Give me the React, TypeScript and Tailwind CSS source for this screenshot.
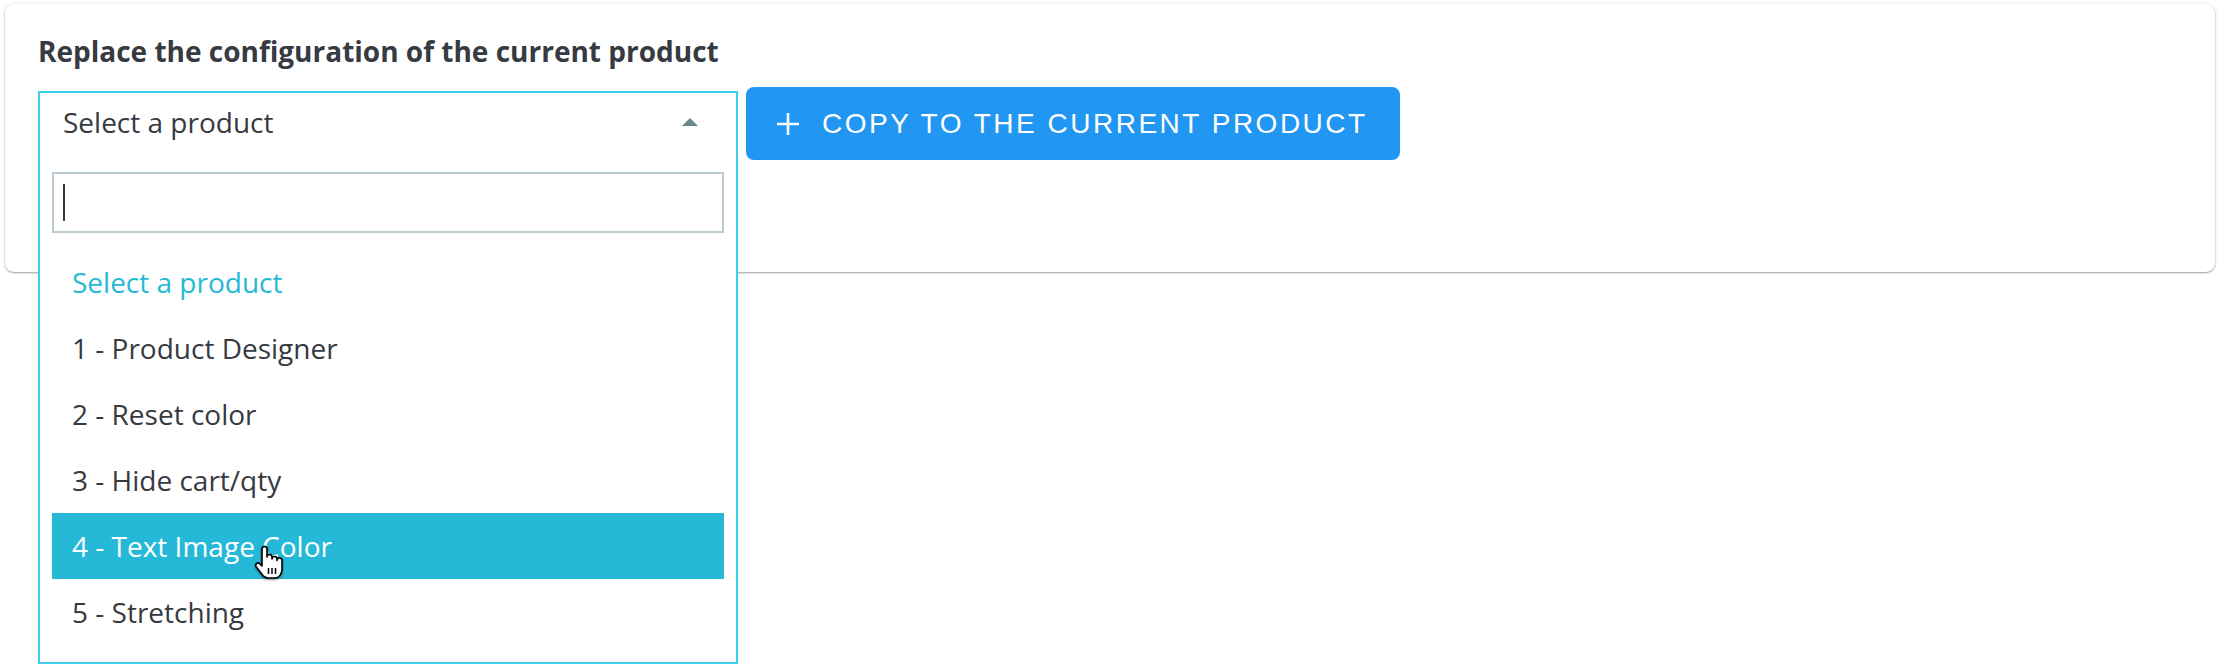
const options = [
  "1 - Product Designer",
  "2 - Reset color",
  "3 - Hide cart/qty",
  "4 - Text Image Color",
  "5 - Stretching",
];

const HandCursor = () => (
  <svg
    className="absolute left-[201px] top-[32px] drop-shadow-[0_1px_1px_rgba(0,0,0,0.5)]"
    width="32"
    height="36"
    viewBox="0 0 32 36"
  >
    <path
      d="M9 21 V4 a2.5 2.5 0 0 1 5 0 V12 a2.5 2.5 0 0 1 5 0 V14 a2.5 2.5 0 0 1 5 0 V15.5 a2.5 2.5 0 0 1 5 0 V24 c0 5 -3 9 -7 9 h-7 c-3 0 -5 -2 -7 -5 l-5 -6.5 a2.3 2.3 0 0 1 3.6 -2.8 Z"
      fill="#fff"
      stroke="#000"
      strokeWidth="1.6"
      strokeLinejoin="round"
    />
    <path d="M15.5 23 V29 M19 23 V29 M22.5 23 V29" stroke="#000" strokeWidth="1.5" />
  </svg>
);

export default function App() {
  return (
    <div className="h-[664px] w-full overflow-hidden bg-white px-[5px] pt-[4px] font-['Open_Sans',sans-serif] text-[#363a41]">
      {/* Card */}
      <div className="rounded-[9px] bg-white pl-[33px] pt-[27px] pb-[112px] shadow-[0_1px_2px_rgba(0,0,0,0.35),0_0_4px_rgba(0,0,0,0.08)]">
        <h2 className="text-[28px] font-bold leading-[40px]">Replace the configuration of the current product</h2>

        <div className="mt-[16px] flex items-end gap-[8px]">
          {/* Open select */}
          <div className="relative w-[700px]">
            <div className="flex h-[69px] items-start justify-between border-2 border-b-0 border-[#3ccfee] pl-[23px] pr-[38px] pt-[9px]">
              <span className="text-[28px] leading-[40px]">Select a product</span>
              <span className="mt-[16px] h-0 w-0 border-x-[8px] border-b-[8px] border-x-transparent border-b-[#6c868e]" />
            </div>

            {/* Dropdown */}
            <div className="absolute left-0 right-0 top-full z-10 border-2 border-t-0 border-[#3ccfee] bg-white px-[12px] pt-[12px] pb-[17px]">
              <div className="flex h-[61px] items-center border-2 border-[#bbcdd2] pl-[9px]">
                <span className="h-[37px] w-[2px] bg-[#363a41]" />
              </div>
              <ul className="mt-[16px] text-[28px] leading-[66px]">
                <li className="h-[66px] pl-[20px] text-[#25b9d7]">Select a product</li>
                {options.map((o, i) => (
                  <li
                    key={o}
                    className={
                      i === 3
                        ? "relative h-[66px] bg-[#25b9d7] pl-[20px] text-white"
                        : "h-[66px] pl-[20px]"
                    }
                  >
                    {o}
                    {i === 3 && <HandCursor />}
                  </li>
                ))}
              </ul>
            </div>
          </div>

          <button className="flex h-[73px] w-[654px] items-center gap-[23px] rounded-[8px] bg-[#2196f3] pl-[31px] font-['Liberation_Sans',Arial,sans-serif] text-white">
            <svg width="22" height="22" viewBox="0 0 22 22">
              <path d="M11 0 V22 M0 11 H22" stroke="#fff" strokeWidth="2.6" />
            </svg>
            <span className="text-[28px] leading-[32px] tracking-[2.5px]">COPY TO THE CURRENT PRODUCT</span>
          </button>
        </div>
      </div>
    </div>
  );
}
